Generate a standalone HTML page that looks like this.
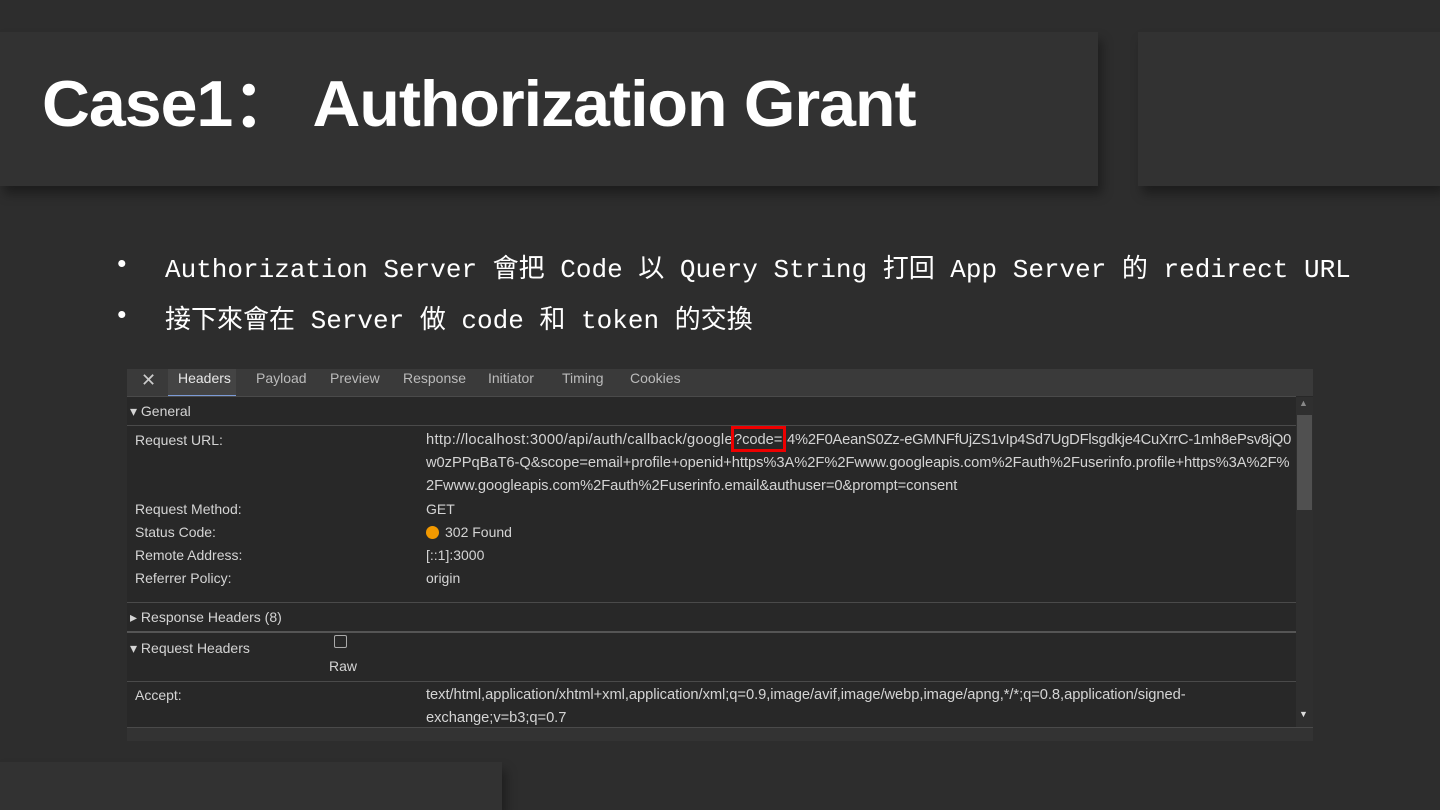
<!DOCTYPE html>
<html><head><meta charset="utf-8"><style>
*{margin:0;padding:0;box-sizing:border-box}
html,body{width:1440px;height:810px;overflow:hidden}
body{background:#2d2d2d;position:relative;font-family:"Liberation Sans",sans-serif}
.box{position:absolute;background:#323232;box-shadow:4px 8px 10px rgba(0,0,0,.35)}
.title{position:absolute;left:42px;top:71px;font-size:65px;line-height:1;font-weight:bold;color:#fff;white-space:nowrap;transform:scaleX(1.02);transform-origin:left top;letter-spacing:-1px}
.b{position:absolute;font-family:"Liberation Mono","Noto Sans CJK TC",monospace;font-size:26px;color:#fff;white-space:nowrap}
.p{position:absolute;left:127px;top:369px;width:1186px;height:372px;background:#282828;overflow:hidden;font-size:14px;color:#d4d4d4}
.t{position:absolute;white-space:nowrap}
.u{font-size:14.7px;letter-spacing:-0.05px}
.hl{position:absolute;left:0;width:1169px;height:1px;background:#4a4a4a}
</style></head><body>
<div class="box" style="left:0;top:32px;width:1098px;height:154px"></div>
<div class="box" style="left:1138px;top:32px;width:302px;height:154px"></div>
<div class="box" style="left:0;top:762px;width:502px;height:48px"></div>
<div class="title">Case1： Authorization Grant</div>
<div class="b" style="left:114px;top:250px">•</div>
<div class="b" style="left:165px;top:248px">Authorization Server 會把 Code 以 Query String 打回 App Server 的 redirect URL</div>
<div class="b" style="left:114px;top:301px">•</div>
<div class="b" style="left:165px;top:299px">接下來會在 Server 做 code 和 token 的交換</div>
<div class="p">
 <div style="position:absolute;left:0;top:0;width:1186px;height:27px;background:#3a3a3a"></div>
 <div style="position:absolute;left:41px;top:0;width:68px;height:27px;background:#444"></div>
 <div style="position:absolute;left:41px;top:26px;width:68px;height:2px;background:#7c9bd6"></div>
 <div class="t" style="left:14px;top:1px;font-size:18px;color:#ccc">✕</div>
 <div class="t" style="left:51px;top:1px;color:#e8e8e8">Headers</div>
 <div class="t" style="left:129px;top:1px;color:#bbb">Payload</div>
 <div class="t" style="left:203px;top:1px;color:#bbb">Preview</div>
 <div class="t" style="left:276px;top:1px;color:#bbb">Response</div>
 <div class="t" style="left:361px;top:1px;color:#bbb">Initiator</div>
 <div class="t" style="left:435px;top:1px;color:#bbb">Timing</div>
 <div class="t" style="left:503px;top:1px;color:#bbb">Cookies</div>
 <div class="hl" style="top:27px"></div>
 <div class="t" style="left:3px;top:34px">▾ General</div>
 <div class="hl" style="top:56px"></div>
 <div class="t" style="left:8px;top:63px">Request URL:</div>
 <div class="t u" style="left:299px;top:63px;letter-spacing:0.3px">http://localhost:3000/api/auth/callback/google</div>
 <div class="t u" style="left:607px;top:63px">?code=</div>
 <div class="t u" style="left:660px;top:63px;letter-spacing:-0.2px">4%2F0AeanS0Zz-eGMNFfUjZS1vIp4Sd7UgDFlsgdkje4CuXrrC-1mh8ePsv8jQ0</div>
 <div style="position:absolute;left:604px;top:57px;width:55px;height:26px;border:3px solid #e00"></div>
 <div class="t u" style="left:299px;top:86px">w0zPPqBaT6-Q&amp;scope=email+profile+openid+https%3A%2F%2Fwww.googleapis.com%2Fauth%2Fuserinfo.profile+https%3A%2F%</div>
 <div class="t u" style="left:299px;top:109px">2Fwww.googleapis.com%2Fauth%2Fuserinfo.email&amp;authuser=0&amp;prompt=consent</div>
 <div class="t" style="left:8px;top:132px">Request Method:</div><div class="t" style="left:299px;top:132px">GET</div>
 <div class="t" style="left:8px;top:155px">Status Code:</div>
 <div style="position:absolute;left:299px;top:157px;width:13px;height:13px;border-radius:50%;background:#f29900"></div>
 <div class="t" style="left:318px;top:155px">302 Found</div>
 <div class="t" style="left:8px;top:178px">Remote Address:</div><div class="t" style="left:299px;top:178px">[::1]:3000</div>
 <div class="t" style="left:8px;top:201px">Referrer Policy:</div><div class="t" style="left:299px;top:201px">origin</div>
 <div class="hl" style="top:233px"></div>
 <div class="t" style="left:3px;top:240px">▸ Response Headers (8)</div>
 <div class="hl" style="top:262px;height:2px;background:#555"></div>
 <div class="t" style="left:3px;top:271px">▾ Request Headers</div>
 <div style="position:absolute;left:207px;top:266px;width:13px;height:13px;border:1px solid #aaa;border-radius:2px"></div>
 <div class="t" style="left:202px;top:289px">Raw</div>
 <div class="hl" style="top:312px"></div>
 <div class="t u" style="left:299px;top:318px">text/html,application/xhtml+xml,application/xml;q=0.9,image/avif,image/webp,image/apng,*/*;q=0.8,application/signed-</div>
 <div class="t" style="left:8px;top:318px">Accept:</div>
 <div class="t u" style="left:299px;top:341px">exchange;v=b3;q=0.7</div>
 <div style="position:absolute;left:0;top:358px;width:1186px;height:14px;background:#333;border-top:1px solid #4a4a4a"></div>
 <div style="position:absolute;left:1169px;top:28px;width:17px;height:330px;background:#2f2f2f"></div>
 <div style="position:absolute;left:1170px;top:46px;width:15px;height:95px;background:#505050"></div>
 <div class="t" style="left:1172px;top:29px;font-size:9px;color:#888">▲</div>
 <div class="t" style="left:1172px;top:340px;font-size:9px;color:#ddd">▼</div>
</div>
</body></html>
